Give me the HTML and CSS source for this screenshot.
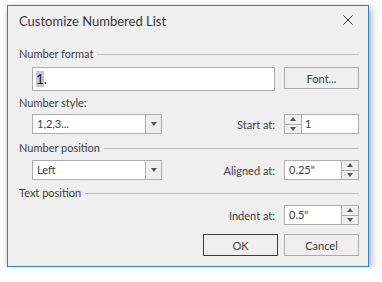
FILE: index.html
```html
<!DOCTYPE html>
<html lang="en">
<head>
    <meta charset="UTF-8">
    <title>Customize Numbered List</title>
    <link rel="stylesheet" href="styles.css">
</head>
<body>
    <div class="dialog">
        <div class="title-bar">
            <span class="title">Customize Numbered List</span>
            <svg class="close" width="10" height="10" viewBox="0 0 10 10">
                <path d="M0.5 0.5 L9.5 9.5 M9.5 0.5 L0.5 9.5" stroke="#333" stroke-width="1" fill="none"/>
            </svg>
        </div>
        <div class="content">
            <div class="group-head">Number format</div>
            <div class="row row-format">
                <div class="text-box format-box"><span class="selected">1</span>.</div>
                <button class="btn btn-font">Font...</button>
            </div>

            <div class="label">Number style:</div>
            <div class="row">
                <div class="combo">
                    <span class="combo-text">1,2,3...</span>
                    <span class="combo-btn"><span class="arrow-down"></span></span>
                </div>
                <div class="field">
                    <span class="field-label">Start at:</span>
                    <div class="spin spin-left">
                        <span class="spin-btns">
                            <span class="spin-up"><span class="arrow-up"></span></span>
                            <span class="spin-down"><span class="arrow-down"></span></span>
                        </span>
                        <span class="spin-text">1</span>
                    </div>
                </div>
            </div>

            <div class="group-head group-pos">Number position</div>
            <div class="row row-mid">
                <div class="combo">
                    <span class="combo-text">Left</span>
                    <span class="combo-btn"><span class="arrow-down"></span></span>
                </div>
                <div class="field">
                    <span class="field-label">Aligned at:</span>
                    <div class="spin">
                        <span class="spin-text">0.25"</span>
                        <span class="spin-btns">
                            <span class="spin-up"><span class="arrow-up"></span></span>
                            <span class="spin-down"><span class="arrow-down"></span></span>
                        </span>
                    </div>
                </div>
            </div>

            <div class="group-head group-text">Text position</div>
            <div class="row row-mid row-end">
                <div class="field">
                    <span class="field-label">Indent at:</span>
                    <div class="spin">
                        <span class="spin-text">0.5"</span>
                        <span class="spin-btns">
                            <span class="spin-up"><span class="arrow-up"></span></span>
                            <span class="spin-down"><span class="arrow-down"></span></span>
                        </span>
                    </div>
                </div>
            </div>

            <div class="buttons">
                <button class="btn btn-default">OK</button>
                <button class="btn">Cancel</button>
            </div>
        </div>
    </div>
</body>
</html>
```

FILE: styles.css
```css
* {
    box-sizing: border-box;
}

body {
    margin: 0;
    padding: 5px 0 0 7px;
    background: #fff;
    font-family: 'Lato', 'Noto Sans', sans-serif;
    font-size: 11px;
    color: #404040;
}

.dialog {
    width: 362px;
    height: 262px;
    background: #efefef;
    border: 1px solid #2a7fd4; /* window accent border */
    box-shadow: 2px 3px 8px rgba(0, 0, 0, 0.35);
}

.title-bar {
    height: 30px;
    display: flex;
    align-items: center;
    padding: 0 15px 0 11px;
}

.title {
    font-size: 13px;
    color: #383838;
    flex: 1;
}

.close {
    margin-top: -2px;
}

.content {
    padding: 0 9px 0 11px;
}

.group-head {
    display: flex;
    align-items: center;
    height: 14px;
    line-height: 14px;
    margin-top: 11px;
}

.group-head::after {
    content: "";
    flex: 1;
    height: 1px;
    background: #bdbdbd;
    margin-left: 4px;
}

.group-pos {
    margin-top: 7px;
}

.group-text {
    margin-top: 6px;
}

.label {
    height: 14px;
    line-height: 14px;
    margin-top: 5px;
}

.row {
    display: flex;
    align-items: center;
    justify-content: space-between;
    padding-left: 13px;
    margin-top: 4px;
    height: 20px;
}

.row-format {
    height: 24px;
    margin-top: 6px;
    align-items: flex-start;
}

.row-mid {
    margin-top: 5px;
}

.row-end {
    justify-content: flex-end;
}

.text-box {
    background: #fff;
    border: 1px solid #adadad;
}

.format-box {
    width: 243px;
    height: 24px;
    padding: 0 3px;
    font-size: 13.5px;
    line-height: 22px;
    color: #222;
}

.selected {
    background: #c8c8c8;
}

.btn {
    font-family: inherit;
    font-size: 11px;
    color: #404040;
    background: #efefef;
    border: 1px solid #adadad;
    width: 75px;
    height: 22px;
    padding: 0;
}

.btn-default {
    border-color: #3c3c3c;
}

.combo {
    width: 130px;
    height: 20px;
    display: flex;
    background: #fff;
    border: 1px solid #adadad;
}

.combo-text {
    flex: 1;
    padding-left: 4px;
    line-height: 18px;
}

.combo-btn {
    width: 16px;
    border-left: 1px solid #adadad;
    background: #efefef;
    display: flex;
    align-items: center;
    justify-content: center;
}

.arrow-down,
.arrow-up {
    width: 0;
    height: 0;
    border-left: 3.5px solid transparent;
    border-right: 3.5px solid transparent;
}

.arrow-down {
    border-top: 4px solid #555;
}

.arrow-up {
    border-bottom: 4px solid #555;
}

.field {
    display: flex;
    align-items: center;
    gap: 9px;
}

.spin {
    width: 75px;
    height: 20px;
    display: flex;
    background: #fff;
    border: 1px solid #adadad;
}

.spin-text {
    flex: 1;
    padding-left: 4px;
    line-height: 18px;
}

.spin-btns {
    width: 17px;
    display: flex;
    flex-direction: column;
    background: #efefef;
    border-left: 1px solid #adadad;
}

.spin-left .spin-btns {
    border-left: none;
    border-right: 1px solid #adadad;
}

.spin-left .spin-text {
    padding-left: 3px;
}

.spin-up,
.spin-down {
    flex: 1;
    display: flex;
    align-items: center;
    justify-content: center;
}

.spin-up {
    border-bottom: 1px solid #adadad;
}

.buttons {
    display: flex;
    justify-content: flex-end;
    gap: 6px;
    margin-top: 9px;
}
```
